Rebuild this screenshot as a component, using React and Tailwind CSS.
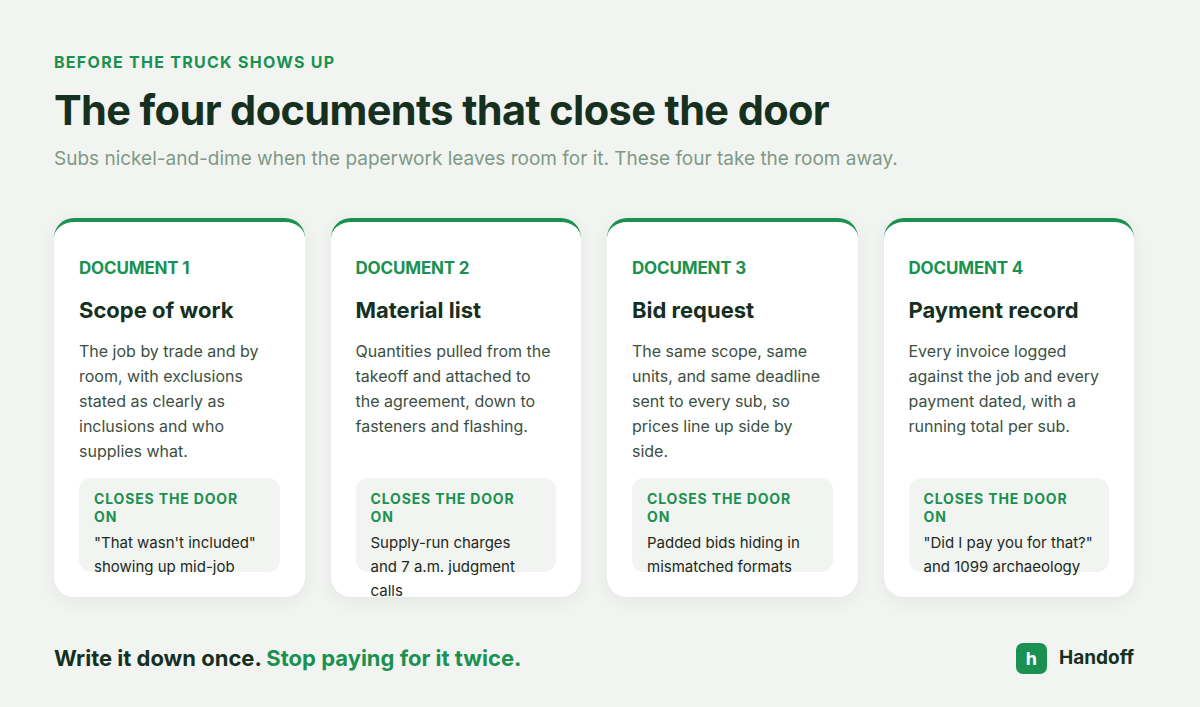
const DOCS = [
  {
    n: 1,
    title: 'Scope of work',
    body: 'The job by trade and by room, with exclusions stated as clearly as inclusions and who supplies what.',
    closes: '"That wasn\'t included" showing up mid-job',
  },
  {
    n: 2,
    title: 'Material list',
    body: 'Quantities pulled from the takeoff and attached to the agreement, down to fasteners and flashing.',
    closes: 'Supply-run charges and 7 a.m. judgment calls',
  },
  {
    n: 3,
    title: 'Bid request',
    body: 'The same scope, same units, and same deadline sent to every sub, so prices line up side by side.',
    closes: 'Padded bids hiding in mismatched formats',
  },
  {
    n: 4,
    title: 'Payment record',
    body: 'Every invoice logged against the job and every payment dated, with a running total per sub.',
    closes: '"Did I pay you for that?" and 1099 archaeology',
  },
];

function DocCard({ doc }) {
  return (
    <div className="flex flex-col rounded-[20px] bg-white border-t-4 border-[#1a9150] px-[25px] pt-[34px] pb-[25px] shadow-[0_4px_16px_rgba(30,60,40,0.07)]">
      <div className="text-[17px] font-bold text-[#1a9150] tracking-[-0.01em] leading-[24px]">DOCUMENT {doc.n}</div>
      <div className="mt-[15px] text-[22px] font-bold text-[#16301f] leading-[30px]">{doc.title}</div>
      <p className="mt-[14px] text-[16px] leading-[25px] text-[#3d4f43] h-[125px]">{doc.body}</p>
      <div className="mt-[14px] rounded-[12px] bg-[#f2f4f1] px-[15px] pt-[12px] pb-[13px] h-[94px]">
        <div className="text-[14px] font-bold tracking-[0.06em] text-[#1a9150] leading-[18px]">CLOSES THE DOOR ON</div>
        <div className="mt-[5px] text-[15px] leading-[24px] text-[#1d2a21]">{doc.closes}</div>
      </div>
    </div>
  );
}

export default function App() {
  return (
    <div className="w-[1200px] h-[707px] bg-[#f2f4f1] pl-[54px] pr-[66px] pt-[52px] flex flex-col" style={{ fontFamily: 'Inter, "Noto Sans", sans-serif' }}>
      <div className="text-[16px] font-bold tracking-[0.08em] text-[#1a9150] leading-[20px]">BEFORE THE TRUCK SHOWS UP</div>
      <h1 className="mt-[14px] text-[41.5px] font-bold text-[#16301f] leading-[48px] tracking-[-0.015em]">The four documents that close the door</h1>
      <p className="mt-[12px] text-[19px] text-[#7f9986] leading-[26px]">Subs nickel-and-dime when the paperwork leaves room for it. These four take the room away.</p>
      <div className="mt-[46px] grid grid-cols-4 gap-[26px] h-[378px]">
        {DOCS.map((d) => (
          <DocCard key={d.n} doc={d} />
        ))}
      </div>
      <div className="mt-[46px] flex items-center justify-between">
        <div className="text-[22px] font-bold text-[#16301f]">
          Write it down once. <span className="text-[#1a9150]">Stop paying for it twice.</span>
        </div>
        <div className="flex items-center gap-[12px]">
          <div className="w-[31px] h-[31px] rounded-[7px] bg-[#1a9150] text-white text-[18px] font-bold flex items-center justify-center">h</div>
          <div className="text-[19px] font-bold text-[#16301f]">Handoff</div>
        </div>
      </div>
    </div>
  );
}
